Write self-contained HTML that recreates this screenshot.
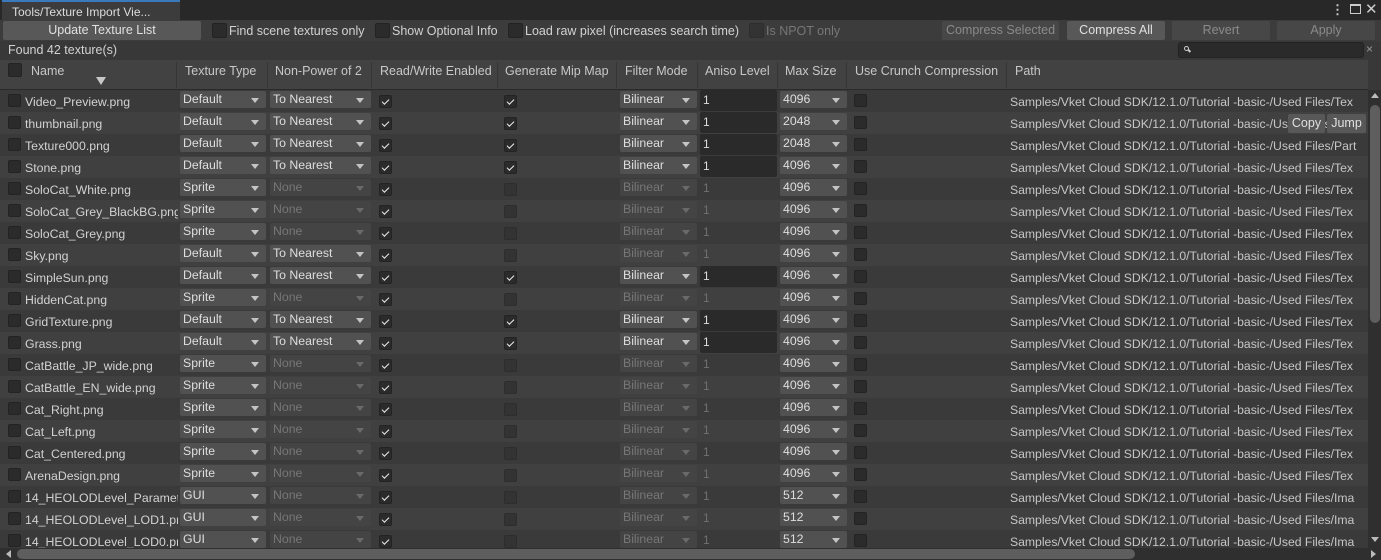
<!DOCTYPE html>
<html><head><meta charset="utf-8"><style>
*{box-sizing:border-box;margin:0;padding:0}
body{width:1381px;height:560px;overflow:hidden;background:#383838;font-family:"Liberation Sans",sans-serif;font-size:12px;color:#d2d2d2;position:relative}
.a{position:absolute;white-space:nowrap}
.tabbar{left:0;top:0;width:1381px;height:20px;background:#282828}
.tab{left:2px;top:0;width:178px;height:20px;background:#3c3c3c;border-top:2px solid #3a79bb;padding:3px 0 0 10px;font-size:12px;color:#ddd}
.tb{left:0;top:20px;width:1381px;height:21px;background:#3c3c3c}
.btn{background:#585858;color:#e0e0e0;text-align:center;height:19px;line-height:19px;border-radius:2px;font-size:12.5px}
.btnd{background:#474747;color:#8a8a8a;text-align:center;height:19px;line-height:19px;border-radius:2px;font-size:12.5px}
.cb{width:13px;height:13px;background:#2b2b2b;border:1px solid #232323;border-radius:2px}
.cb.c::after{content:"";position:absolute;width:6px;height:3px;border-left:1.5px solid #eee;border-bottom:1.5px solid #eee;transform:rotate(-45deg);top:3px;left:2px}
.cb.d{background:#333;border-color:#2d2d2d}
.hdr{left:0;top:60px;width:1368px;height:30px;background:#424242;border-bottom:1px solid #2a2a2a;color:#c8c8c8;font-size:12.5px}
.hdr span{position:absolute;top:4px}
.sep{position:absolute;top:2px;width:1px;height:26px;background:#363636}
.row{position:absolute;left:0;width:1368px;height:22px;overflow:hidden;white-space:nowrap}
.r0{background:#3a3a3a}.r1{background:#404040}
.row>*{position:absolute}
.nm{left:25px;top:5px;width:153px;overflow:hidden;color:#d2d2d2;font-size:12.3px}
.dd{top:1px;height:17px;background:#515151;border-radius:2px;padding:0 0 0 3px;line-height:17px;color:#dedede;font-size:12.3px}
.dd::after{content:"";position:absolute;right:7px;top:7px;border-left:4px solid transparent;border-right:4px solid transparent;border-top:5px solid #c4c4c4}
.dd.x{background:#444;color:#777}.dd.x::after{border-top-color:#6a6a6a}
.ai{left:700px;top:0;width:77px;height:21px;background:#2a2a2a;padding:3px 0 0 3px;color:#ddd;border-radius:2px}
.ai.x{background:none;color:#707070}
.pt{left:1010px;top:5px;color:#c6c6c6;font-size:12.2px}
</style></head><body>
<div class="a tabbar"></div>
<div class="a tab">Tools/Texture Import Vie...</div>
<div class="a" style="left:1331px;top:2px;color:#ccc;font-size:13px;font-weight:bold">⋮</div>
<div class="a" style="left:1350px;top:4px;width:11px;height:10px;border:1.5px solid #ccc;border-top-width:2.5px"></div>
<div class="a" style="left:1365px;top:0px;color:#ccc;font-size:15px">✕</div>
<div class="a tb"></div>
<div class="a btn" style="left:3px;top:21px;width:198px">Update Texture List</div>
<div class="a cb" style="left:212px;top:23px;width:15px;height:15px"></div>
<div class="a" style="left:229px;top:24px;font-size:12.5px">Find scene textures only</div>
<div class="a cb" style="left:375px;top:23px;width:15px;height:15px"></div>
<div class="a" style="left:392px;top:24px;font-size:12.5px">Show Optional Info</div>
<div class="a cb" style="left:508px;top:23px;width:15px;height:15px"></div>
<div class="a" style="left:525px;top:24px;font-size:12.5px">Load raw pixel (increases search time)</div>
<div class="a cb d" style="left:749px;top:23px;width:15px;height:15px"></div>
<div class="a" style="left:766px;top:24px;color:#777;font-size:12.5px">Is NPOT only</div>
<div class="a btnd" style="left:942px;top:21px;width:117px">Compress Selected</div>
<div class="a btn" style="left:1067px;top:21px;width:98px">Compress All</div>
<div class="a btnd" style="left:1172px;top:21px;width:98px">Revert</div>
<div class="a btnd" style="left:1277px;top:21px;width:98px">Apply</div>
<div class="a" style="left:0;top:41px;width:1381px;height:19px;background:#383838"></div>
<div class="a" style="left:8px;top:43px;font-size:12.5px">Found 42 texture(s)</div>
<div class="a" style="left:1178px;top:42px;width:186px;height:16px;background:#2a2a2a;border:1px solid #222;border-radius:3px"></div>
<div class="a" style="left:1184px;top:46px;width:5px;height:5px;border:1px solid #ccc;border-radius:50%"></div>
<div class="a" style="left:1188px;top:50px;width:3px;height:1.5px;background:#ccc;transform:rotate(45deg)"></div>
<div class="a" style="left:1366px;top:42px;color:#999;font-size:12px">×</div>
<div class="a hdr">
<div class="a cb" style="left:8px;top:3px;width:14px;height:14px"></div>
<span style="left:31px">Name</span>
<div class="a" style="left:96px;top:17px;border-left:5px solid transparent;border-right:5px solid transparent;border-top:8px solid #c8c8c8"></div>
<div class="sep" style="left:176px"></div><span style="left:185px">Texture Type</span>
<div class="sep" style="left:267px"></div><span style="left:275px">Non-Power of 2</span>
<div class="sep" style="left:371px"></div><span style="left:380px">Read/Write Enabled</span>
<div class="sep" style="left:497px"></div><span style="left:505px">Generate Mip Map</span>
<div class="sep" style="left:616px"></div><span style="left:625px">Filter Mode</span>
<div class="sep" style="left:697px"></div><span style="left:705px">Aniso Level</span>
<div class="sep" style="left:777px"></div><span style="left:785px">Max Size</span>
<div class="sep" style="left:846px"></div><span style="left:855px">Use Crunch Compression</span>
<div class="sep" style="left:1006px"></div><span style="left:1015px">Path</span>
</div>

<div class="row r0" style="top:90px"><div class="cb" style="left:8px;top:4px"></div><div class="nm">Video_Preview.png</div><div class="dd" style="left:180px;width:86px">Default</div><div class="dd" style="left:270px;width:101px">To Nearest</div><div class="cb c" style="left:379px;top:5px"></div><div class="cb c" style="left:504px;top:5px"></div><div class="dd" style="left:620px;width:77px">Bilinear</div><div class="ai">1</div><div class="dd" style="left:780px;width:67px">4096</div><div class="cb" style="left:854px;top:4px"></div><div class="pt">Samples/Vket Cloud SDK/12.1.0/Tutorial -basic-/Used Files/Tex</div></div>
<div class="row r1" style="top:112px"><div class="cb" style="left:8px;top:4px"></div><div class="nm">thumbnail.png</div><div class="dd" style="left:180px;width:86px">Default</div><div class="dd" style="left:270px;width:101px">To Nearest</div><div class="cb c" style="left:379px;top:5px"></div><div class="cb c" style="left:504px;top:5px"></div><div class="dd" style="left:620px;width:77px">Bilinear</div><div class="ai">1</div><div class="dd" style="left:780px;width:67px">2048</div><div class="cb" style="left:854px;top:4px"></div><div class="pt">Samples/Vket Cloud SDK/12.1.0/Tutorial -basic-/Used Files/Tex</div><div class="btn" style="left:1288px;top:2px;width:37px;height:19px;line-height:19px">Copy</div><div class="btn" style="left:1327px;top:2px;width:39px;height:19px;line-height:19px">Jump</div></div>
<div class="row r0" style="top:134px"><div class="cb" style="left:8px;top:4px"></div><div class="nm">Texture000.png</div><div class="dd" style="left:180px;width:86px">Default</div><div class="dd" style="left:270px;width:101px">To Nearest</div><div class="cb c" style="left:379px;top:5px"></div><div class="cb c" style="left:504px;top:5px"></div><div class="dd" style="left:620px;width:77px">Bilinear</div><div class="ai">1</div><div class="dd" style="left:780px;width:67px">2048</div><div class="cb" style="left:854px;top:4px"></div><div class="pt">Samples/Vket Cloud SDK/12.1.0/Tutorial -basic-/Used Files/Part</div></div>
<div class="row r1" style="top:156px"><div class="cb" style="left:8px;top:4px"></div><div class="nm">Stone.png</div><div class="dd" style="left:180px;width:86px">Default</div><div class="dd" style="left:270px;width:101px">To Nearest</div><div class="cb c" style="left:379px;top:5px"></div><div class="cb c" style="left:504px;top:5px"></div><div class="dd" style="left:620px;width:77px">Bilinear</div><div class="ai">1</div><div class="dd" style="left:780px;width:67px">4096</div><div class="cb" style="left:854px;top:4px"></div><div class="pt">Samples/Vket Cloud SDK/12.1.0/Tutorial -basic-/Used Files/Tex</div></div>
<div class="row r0" style="top:178px"><div class="cb" style="left:8px;top:4px"></div><div class="nm">SoloCat_White.png</div><div class="dd" style="left:180px;width:86px">Sprite</div><div class="dd x" style="left:270px;width:101px">None</div><div class="cb c" style="left:379px;top:5px"></div><div class="cb d" style="left:504px;top:5px"></div><div class="dd x" style="left:620px;width:77px">Bilinear</div><div class="ai x">1</div><div class="dd" style="left:780px;width:67px">4096</div><div class="cb" style="left:854px;top:4px"></div><div class="pt">Samples/Vket Cloud SDK/12.1.0/Tutorial -basic-/Used Files/Tex</div></div>
<div class="row r1" style="top:200px"><div class="cb" style="left:8px;top:4px"></div><div class="nm">SoloCat_Grey_BlackBG.png</div><div class="dd" style="left:180px;width:86px">Sprite</div><div class="dd x" style="left:270px;width:101px">None</div><div class="cb c" style="left:379px;top:5px"></div><div class="cb d" style="left:504px;top:5px"></div><div class="dd x" style="left:620px;width:77px">Bilinear</div><div class="ai x">1</div><div class="dd" style="left:780px;width:67px">4096</div><div class="cb" style="left:854px;top:4px"></div><div class="pt">Samples/Vket Cloud SDK/12.1.0/Tutorial -basic-/Used Files/Tex</div></div>
<div class="row r0" style="top:222px"><div class="cb" style="left:8px;top:4px"></div><div class="nm">SoloCat_Grey.png</div><div class="dd" style="left:180px;width:86px">Sprite</div><div class="dd x" style="left:270px;width:101px">None</div><div class="cb c" style="left:379px;top:5px"></div><div class="cb d" style="left:504px;top:5px"></div><div class="dd x" style="left:620px;width:77px">Bilinear</div><div class="ai x">1</div><div class="dd" style="left:780px;width:67px">4096</div><div class="cb" style="left:854px;top:4px"></div><div class="pt">Samples/Vket Cloud SDK/12.1.0/Tutorial -basic-/Used Files/Tex</div></div>
<div class="row r1" style="top:244px"><div class="cb" style="left:8px;top:4px"></div><div class="nm">Sky.png</div><div class="dd" style="left:180px;width:86px">Default</div><div class="dd" style="left:270px;width:101px">To Nearest</div><div class="cb c" style="left:379px;top:5px"></div><div class="cb d" style="left:504px;top:5px"></div><div class="dd x" style="left:620px;width:77px">Bilinear</div><div class="ai x">1</div><div class="dd" style="left:780px;width:67px">4096</div><div class="cb" style="left:854px;top:4px"></div><div class="pt">Samples/Vket Cloud SDK/12.1.0/Tutorial -basic-/Used Files/Tex</div></div>
<div class="row r0" style="top:266px"><div class="cb" style="left:8px;top:4px"></div><div class="nm">SimpleSun.png</div><div class="dd" style="left:180px;width:86px">Default</div><div class="dd" style="left:270px;width:101px">To Nearest</div><div class="cb c" style="left:379px;top:5px"></div><div class="cb c" style="left:504px;top:5px"></div><div class="dd" style="left:620px;width:77px">Bilinear</div><div class="ai">1</div><div class="dd" style="left:780px;width:67px">4096</div><div class="cb" style="left:854px;top:4px"></div><div class="pt">Samples/Vket Cloud SDK/12.1.0/Tutorial -basic-/Used Files/Tex</div></div>
<div class="row r1" style="top:288px"><div class="cb" style="left:8px;top:4px"></div><div class="nm">HiddenCat.png</div><div class="dd" style="left:180px;width:86px">Sprite</div><div class="dd x" style="left:270px;width:101px">None</div><div class="cb c" style="left:379px;top:5px"></div><div class="cb d" style="left:504px;top:5px"></div><div class="dd x" style="left:620px;width:77px">Bilinear</div><div class="ai x">1</div><div class="dd" style="left:780px;width:67px">4096</div><div class="cb" style="left:854px;top:4px"></div><div class="pt">Samples/Vket Cloud SDK/12.1.0/Tutorial -basic-/Used Files/Tex</div></div>
<div class="row r0" style="top:310px"><div class="cb" style="left:8px;top:4px"></div><div class="nm">GridTexture.png</div><div class="dd" style="left:180px;width:86px">Default</div><div class="dd" style="left:270px;width:101px">To Nearest</div><div class="cb c" style="left:379px;top:5px"></div><div class="cb c" style="left:504px;top:5px"></div><div class="dd" style="left:620px;width:77px">Bilinear</div><div class="ai">1</div><div class="dd" style="left:780px;width:67px">4096</div><div class="cb" style="left:854px;top:4px"></div><div class="pt">Samples/Vket Cloud SDK/12.1.0/Tutorial -basic-/Used Files/Tex</div></div>
<div class="row r1" style="top:332px"><div class="cb" style="left:8px;top:4px"></div><div class="nm">Grass.png</div><div class="dd" style="left:180px;width:86px">Default</div><div class="dd" style="left:270px;width:101px">To Nearest</div><div class="cb c" style="left:379px;top:5px"></div><div class="cb c" style="left:504px;top:5px"></div><div class="dd" style="left:620px;width:77px">Bilinear</div><div class="ai">1</div><div class="dd" style="left:780px;width:67px">4096</div><div class="cb" style="left:854px;top:4px"></div><div class="pt">Samples/Vket Cloud SDK/12.1.0/Tutorial -basic-/Used Files/Tex</div></div>
<div class="row r0" style="top:354px"><div class="cb" style="left:8px;top:4px"></div><div class="nm">CatBattle_JP_wide.png</div><div class="dd" style="left:180px;width:86px">Sprite</div><div class="dd x" style="left:270px;width:101px">None</div><div class="cb c" style="left:379px;top:5px"></div><div class="cb d" style="left:504px;top:5px"></div><div class="dd x" style="left:620px;width:77px">Bilinear</div><div class="ai x">1</div><div class="dd" style="left:780px;width:67px">4096</div><div class="cb" style="left:854px;top:4px"></div><div class="pt">Samples/Vket Cloud SDK/12.1.0/Tutorial -basic-/Used Files/Tex</div></div>
<div class="row r1" style="top:376px"><div class="cb" style="left:8px;top:4px"></div><div class="nm">CatBattle_EN_wide.png</div><div class="dd" style="left:180px;width:86px">Sprite</div><div class="dd x" style="left:270px;width:101px">None</div><div class="cb c" style="left:379px;top:5px"></div><div class="cb d" style="left:504px;top:5px"></div><div class="dd x" style="left:620px;width:77px">Bilinear</div><div class="ai x">1</div><div class="dd" style="left:780px;width:67px">4096</div><div class="cb" style="left:854px;top:4px"></div><div class="pt">Samples/Vket Cloud SDK/12.1.0/Tutorial -basic-/Used Files/Tex</div></div>
<div class="row r0" style="top:398px"><div class="cb" style="left:8px;top:4px"></div><div class="nm">Cat_Right.png</div><div class="dd" style="left:180px;width:86px">Sprite</div><div class="dd x" style="left:270px;width:101px">None</div><div class="cb c" style="left:379px;top:5px"></div><div class="cb d" style="left:504px;top:5px"></div><div class="dd x" style="left:620px;width:77px">Bilinear</div><div class="ai x">1</div><div class="dd" style="left:780px;width:67px">4096</div><div class="cb" style="left:854px;top:4px"></div><div class="pt">Samples/Vket Cloud SDK/12.1.0/Tutorial -basic-/Used Files/Tex</div></div>
<div class="row r1" style="top:420px"><div class="cb" style="left:8px;top:4px"></div><div class="nm">Cat_Left.png</div><div class="dd" style="left:180px;width:86px">Sprite</div><div class="dd x" style="left:270px;width:101px">None</div><div class="cb c" style="left:379px;top:5px"></div><div class="cb d" style="left:504px;top:5px"></div><div class="dd x" style="left:620px;width:77px">Bilinear</div><div class="ai x">1</div><div class="dd" style="left:780px;width:67px">4096</div><div class="cb" style="left:854px;top:4px"></div><div class="pt">Samples/Vket Cloud SDK/12.1.0/Tutorial -basic-/Used Files/Tex</div></div>
<div class="row r0" style="top:442px"><div class="cb" style="left:8px;top:4px"></div><div class="nm">Cat_Centered.png</div><div class="dd" style="left:180px;width:86px">Sprite</div><div class="dd x" style="left:270px;width:101px">None</div><div class="cb c" style="left:379px;top:5px"></div><div class="cb d" style="left:504px;top:5px"></div><div class="dd x" style="left:620px;width:77px">Bilinear</div><div class="ai x">1</div><div class="dd" style="left:780px;width:67px">4096</div><div class="cb" style="left:854px;top:4px"></div><div class="pt">Samples/Vket Cloud SDK/12.1.0/Tutorial -basic-/Used Files/Tex</div></div>
<div class="row r1" style="top:464px"><div class="cb" style="left:8px;top:4px"></div><div class="nm">ArenaDesign.png</div><div class="dd" style="left:180px;width:86px">Sprite</div><div class="dd x" style="left:270px;width:101px">None</div><div class="cb c" style="left:379px;top:5px"></div><div class="cb d" style="left:504px;top:5px"></div><div class="dd x" style="left:620px;width:77px">Bilinear</div><div class="ai x">1</div><div class="dd" style="left:780px;width:67px">4096</div><div class="cb" style="left:854px;top:4px"></div><div class="pt">Samples/Vket Cloud SDK/12.1.0/Tutorial -basic-/Used Files/Tex</div></div>
<div class="row r0" style="top:486px"><div class="cb" style="left:8px;top:4px"></div><div class="nm">14_HEOLODLevel_Parameter.png</div><div class="dd" style="left:180px;width:86px">GUI</div><div class="dd x" style="left:270px;width:101px">None</div><div class="cb c" style="left:379px;top:5px"></div><div class="cb d" style="left:504px;top:5px"></div><div class="dd x" style="left:620px;width:77px">Bilinear</div><div class="ai x">1</div><div class="dd" style="left:780px;width:67px">512</div><div class="cb" style="left:854px;top:4px"></div><div class="pt">Samples/Vket Cloud SDK/12.1.0/Tutorial -basic-/Used Files/Ima</div></div>
<div class="row r1" style="top:508px"><div class="cb" style="left:8px;top:4px"></div><div class="nm">14_HEOLODLevel_LOD1.png</div><div class="dd" style="left:180px;width:86px">GUI</div><div class="dd x" style="left:270px;width:101px">None</div><div class="cb c" style="left:379px;top:5px"></div><div class="cb d" style="left:504px;top:5px"></div><div class="dd x" style="left:620px;width:77px">Bilinear</div><div class="ai x">1</div><div class="dd" style="left:780px;width:67px">512</div><div class="cb" style="left:854px;top:4px"></div><div class="pt">Samples/Vket Cloud SDK/12.1.0/Tutorial -basic-/Used Files/Ima</div></div>
<div class="row r0" style="top:530px"><div class="cb" style="left:8px;top:4px"></div><div class="nm">14_HEOLODLevel_LOD0.png</div><div class="dd" style="left:180px;width:86px">GUI</div><div class="dd x" style="left:270px;width:101px">None</div><div class="cb c" style="left:379px;top:5px"></div><div class="cb d" style="left:504px;top:5px"></div><div class="dd x" style="left:620px;width:77px">Bilinear</div><div class="ai x">1</div><div class="dd" style="left:780px;width:67px">512</div><div class="cb" style="left:854px;top:4px"></div><div class="pt">Samples/Vket Cloud SDK/12.1.0/Tutorial -basic-/Used Files/Ima</div></div>

<div class="a" style="left:1368px;top:90px;width:13px;height:458px;background:#2f2f2f"></div>
<div class="a" style="left:1371px;top:93px;border-left:4px solid transparent;border-right:4px solid transparent;border-bottom:5px solid #bbb"></div>
<div class="a" style="left:1370px;top:105px;width:10px;height:218px;background:#5e5e5e;border-radius:5px"></div>
<div class="a" style="left:1371px;top:537px;border-left:4px solid transparent;border-right:4px solid transparent;border-top:5px solid #bbb"></div>
<div class="a" style="left:0;top:548px;width:1381px;height:12px;background:#2f2f2f"></div>
<div class="a" style="left:6px;top:550px;border-top:4px solid transparent;border-bottom:4px solid transparent;border-right:5px solid #bbb"></div>
<div class="a" style="left:17px;top:549px;width:1118px;height:10px;background:#5e5e5e;border-radius:5px"></div>
<div class="a" style="left:1371px;top:550px;border-top:4px solid transparent;border-bottom:4px solid transparent;border-left:5px solid #bbb"></div>
</body></html>
